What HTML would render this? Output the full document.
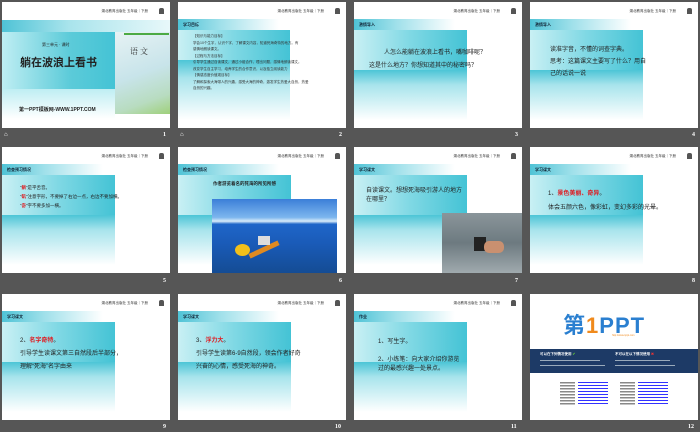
<!DOCTYPE html>
<html><head><meta charset="utf-8"><style>
*{margin:0;padding:0;box-sizing:border-box}
body{width:700px;height:432px;background:#565656;position:relative;overflow:hidden;font-family:"Liberation Sans","Noto Sans CJK SC",sans-serif}
.s{position:absolute;width:168px;height:126px;background:#fff;overflow:hidden}
.n{position:absolute;color:#fff;font-size:6px;font-weight:bold;font-family:"Liberation Serif",serif}
.hd{position:absolute;top:7px;right:22px;font-size:3.5px;color:#333;white-space:nowrap}
.ic{position:absolute;top:6px;right:6px;width:5px;height:6px;background:#555;border-radius:2px 2px 0 0}
.bar{position:absolute;left:0;top:17px;width:168px;height:11px;background:linear-gradient(to right,#4fc3d6 0%,#9fe0ea 25%,#fff 60%)}
.bt{position:absolute;left:5px;top:20px;font-size:4px;font-weight:bold;color:#123}
.blk{position:absolute;left:0;top:28px;width:113px;height:40px;background:linear-gradient(to right,#c9f0f4 0%,#7fd8e4 50%,#44c3d5 100%)}
.low{position:absolute;left:0;top:68px;width:113px;height:50px;background:linear-gradient(to bottom,#4cc5d6 0%,#a8e4ec 30%,#fff 100%)}
.t{position:absolute;color:#222;white-space:nowrap}
.r{color:#e0191e;font-weight:bold}
</style></head><body>

<!-- slide 1 -->
<div class="s" style="left:2px;top:2px">
<div class="hd">湖北教育出版社 五年级｜下册</div><div class="ic"></div>
<div style="position:absolute;left:0;top:18px;width:168px;height:12px;background:linear-gradient(to right,#4fc3d6,#a9e4ec 40%,#e8f8fa)"></div>
<div style="position:absolute;left:0;top:30px;width:113px;height:57px;background:linear-gradient(to right,#bfeef3,#5ccbd9 60%,#44c3d5)"></div>
<div style="position:absolute;left:0;top:87px;width:113px;height:30px;background:linear-gradient(to bottom,#bfeef3,#fff)"></div>
<div style="position:absolute;left:113px;top:30px;width:55px;height:82px;background:linear-gradient(160deg,#e6f2f4,#c8e4ea 50%,#b8dcc0 80%,#9fd07a)"></div>
<div style="position:absolute;left:122px;top:31px;width:45px;height:2px;background:#4caa44"></div>
<div class="t" style="left:128px;top:44px;font-size:8px;font-family:'Noto Serif CJK SC',serif;color:#333">语 文</div>
<div class="t" style="left:40px;top:40px;font-size:4px">第三单元 · 课时</div>
<div class="t" style="left:18px;top:52px;font-size:11px;font-weight:bold;color:#222">躺在波浪上看书</div>
<div class="t" style="left:17px;top:104px;font-size:5px;font-weight:bold">第一PPT模板网-WWW.1PPT.COM</div>
</div>
<div class="n" style="left:4px;top:132px;font-weight:normal">⌂</div><div class="n" style="left:163px;top:132px">1</div>

<!-- slide 2 -->
<div class="s" style="left:178px;top:2px">
<div class="hd">湖北教育出版社 五年级｜下册</div><div class="ic"></div>
<div class="bar"></div><div class="bt">学习目标</div><div class="blk" style="height:30px;width:112px"></div><div class="low" style="top:58px;height:60px;width:112px"></div>
<div class="t" style="left:15px;top:31px;font-size:3.5px;line-height:6.5px;color:#333">【知识与能力目标】<br>学会10个生字，认识个字，了解课文内容，知道死海奇特的地方。有<br>感情地朗读课文。<br>【过程与方法目标】<br>引导学生通过自读课文，通过小组合作，理出问题，感情地朗读课文。<br>改变学生自主学习，培养学生的合作意识，以及独立阅读能力<br>【情感态度价值观目标】<br>了解和探索大海带人的兴趣，感受大海的神奇，激发学生热爱大自然，热爱<br>自然的兴趣。</div>
</div>
<div class="n" style="left:180px;top:132px;font-weight:normal">⌂</div><div class="n" style="left:339px;top:132px">2</div>

<!-- slide 3 -->
<div class="s" style="left:354px;top:2px">
<div class="hd">湖北教育出版社 五年级｜下册</div><div class="ic"></div>
<div class="bar"></div><div class="bt">激情导入</div><div class="blk"></div><div class="low"></div>
<div class="t" style="left:30px;top:45px;font-size:6px">人怎么能躺在波浪上看书，嘴咖啡呢？</div>
<div class="t" style="left:15px;top:58px;font-size:6px">这是什么地方？你想知道其中的秘密吗？</div>
</div>
<div class="n" style="left:515px;top:132px">3</div>

<!-- slide 4 -->
<div class="s" style="left:530px;top:2px">
<div class="hd">湖北教育出版社 五年级｜下册</div><div class="ic"></div>
<div class="bar"></div><div class="bt">激情导入</div><div class="blk"></div><div class="low"></div>
<div class="t" style="left:20px;top:42px;font-size:6px;line-height:12px">读准字音，不懂的词查字典。<br>思考：这篇课文主要写了什么？用自<br>己的话说一说</div>
</div>
<div class="n" style="left:692px;top:132px">4</div>

<!-- slide 5 -->
<div class="s" style="left:2px;top:147px">
<div class="hd">湖北教育出版社 五年级｜下册</div><div class="ic"></div>
<div class="bar"></div><div class="bt">检查预习情况</div><div class="blk"></div><div class="low"></div>
<div class="t" style="left:18px;top:36px;font-size:4.5px;line-height:9px">“<span class="r">躺</span>”是平舌音。<br>“<span class="r">矶</span>”注意字形，不要掉了右边一点，右边不要加横。<br>“<span class="r">奇</span>”字不要多加一横。</div>
</div>
<div class="n" style="left:163px;top:278px">5</div>

<!-- slide 6 -->
<div class="s" style="left:178px;top:147px">
<div class="hd">湖北教育出版社 五年级｜下册</div><div class="ic"></div>
<div class="bar"></div><div class="bt">检查预习情况</div><div class="blk"></div><div class="low"></div>
<div class="t" style="left:35px;top:34px;font-size:4.5px;font-weight:bold">作者游览着名的死海的所见所感</div>
<div style="position:absolute;left:34px;top:52px;width:125px;height:74px;background:linear-gradient(to bottom,#3b7fd8 0%,#7db6ee 25%,#d8ecfa 30%,#1f66c9 34%,#1a5bb8 60%,#144c94 100%)"></div>
<div style="position:absolute;left:57px;top:97px;width:15px;height:12px;border-radius:50%;background:#f2c01b"></div>
<div style="position:absolute;left:70px;top:100px;width:32px;height:5px;background:#e08a20;transform:rotate(-25deg)"></div>
<div style="position:absolute;left:80px;top:89px;width:12px;height:9px;background:#ddd"></div>
</div>
<div class="n" style="left:339px;top:278px">6</div>

<!-- slide 7 -->
<div class="s" style="left:354px;top:147px">
<div class="hd">湖北教育出版社 五年级｜下册</div><div class="ic"></div>
<div class="bar"></div><div class="bt">学习课文</div><div class="blk"></div><div class="low"></div>
<div class="t" style="left:12px;top:40px;font-size:6px;line-height:9px">自读课文。想想死海吸引游人的地方<br>在哪里？</div>
<div style="position:absolute;left:88px;top:66px;width:80px;height:60px;background:linear-gradient(to bottom,#8a959a,#6d7a80 50%,#a0aaae)"></div>
<div style="position:absolute;left:120px;top:90px;width:12px;height:14px;background:#222"></div>
<div style="position:absolute;left:130px;top:94px;width:20px;height:12px;border-radius:5px;background:#c99070"></div>
</div>
<div class="n" style="left:515px;top:278px">7</div>

<!-- slide 8 -->
<div class="s" style="left:530px;top:147px">
<div class="hd">湖北教育出版社 五年级｜下册</div><div class="ic"></div>
<div class="bar"></div><div class="bt">学习课文</div><div class="blk"></div><div class="low"></div>
<div class="t" style="left:18px;top:40px;font-size:6px;line-height:14px">1、<span class="r">景色美丽、奇异</span>。<br>体会五颜六色，像彩虹，变幻多彩的光晕。</div>
</div>
<div class="n" style="left:692px;top:278px">8</div>

<!-- slide 9 -->
<div class="s" style="left:2px;top:294px">
<div class="hd">湖北教育出版社 五年级｜下册</div><div class="ic"></div>
<div class="bar"></div><div class="bt">学习课文</div><div class="blk"></div><div class="low"></div>
<div class="t" style="left:18px;top:41px;font-size:6px;line-height:13px">2、<span class="r">名字奇特</span>。<br>引导学生读课文第三自然段后半部分，<br>理解“死海”名字由来</div>
</div>
<div class="n" style="left:163px;top:424px">9</div>

<!-- slide 10 -->
<div class="s" style="left:178px;top:294px">
<div class="hd">湖北教育出版社 五年级｜下册</div><div class="ic"></div>
<div class="bar"></div><div class="bt">学习课文</div><div class="blk"></div><div class="low"></div>
<div class="t" style="left:18px;top:41px;font-size:6px;line-height:13px">3、<span class="r">浮力大</span>。<br>引导学生读第6-9自然段，领会作者好奇<br>兴奋的心情，感受死海的神奇。</div>
</div>
<div class="n" style="left:335px;top:424px">10</div>

<!-- slide 11 -->
<div class="s" style="left:354px;top:294px">
<div class="hd">湖北教育出版社 五年级｜下册</div><div class="ic"></div>
<div class="bar"></div><div class="bt">作业</div><div class="blk"></div><div class="low"></div>
<div class="t" style="left:24px;top:44px;font-size:6px;line-height:9px">1、写生字。<br><br>2、小练笔：向大家介绍你游览<br>过的最感兴趣一处景点。</div>
</div>
<div class="n" style="left:511px;top:424px">11</div>

<!-- slide 12 -->
<div class="s" style="left:530px;top:294px">
<div class="t" style="left:33px;top:14px;font-size:22px;font-weight:bold;color:#2a7fd0;letter-spacing:1px">第<span style="color:#f08a1c">1</span>PPT</div>
<div class="t" style="left:82px;top:40px;font-size:2.5px;color:#f08a1c">http://www.1ppt.com</div>
<div style="position:absolute;left:0;top:55px;width:168px;height:24px;background:#1d3a66"></div>
<div class="t" style="left:10px;top:58px;font-size:3.5px;color:#fff;font-weight:bold">可以在下列情况使用 <span style="color:#6c3">✔</span></div>
<div class="t" style="left:85px;top:58px;font-size:3.5px;color:#fff;font-weight:bold">不可以在以下情况使用 <span style="color:#e33">✖</span></div>
<div style="position:absolute;left:10px;top:66px;width:60px;height:1px;background:#9ab"></div>
<div style="position:absolute;left:10px;top:71px;width:65px;height:1px;background:#9ab"></div>
<div style="position:absolute;left:85px;top:66px;width:55px;height:1px;background:#9ab"></div>
<div style="position:absolute;left:85px;top:71px;width:60px;height:1px;background:#9ab"></div>
<div style="position:absolute;left:30px;top:88px;width:15px;height:24px;background:repeating-linear-gradient(#888 0 1.5px,#fff 1.5px 3px)"></div>
<div style="position:absolute;left:48px;top:88px;width:30px;height:24px;background:repeating-linear-gradient(#33f 0 1px,#fff 1px 3px)"></div>
<div style="position:absolute;left:90px;top:88px;width:15px;height:24px;background:repeating-linear-gradient(#888 0 1.5px,#fff 1.5px 3px)"></div>
<div style="position:absolute;left:108px;top:88px;width:30px;height:24px;background:repeating-linear-gradient(#33f 0 1px,#fff 1px 3px)"></div>
</div>
<div class="n" style="left:688px;top:424px">12</div>

</body></html>
